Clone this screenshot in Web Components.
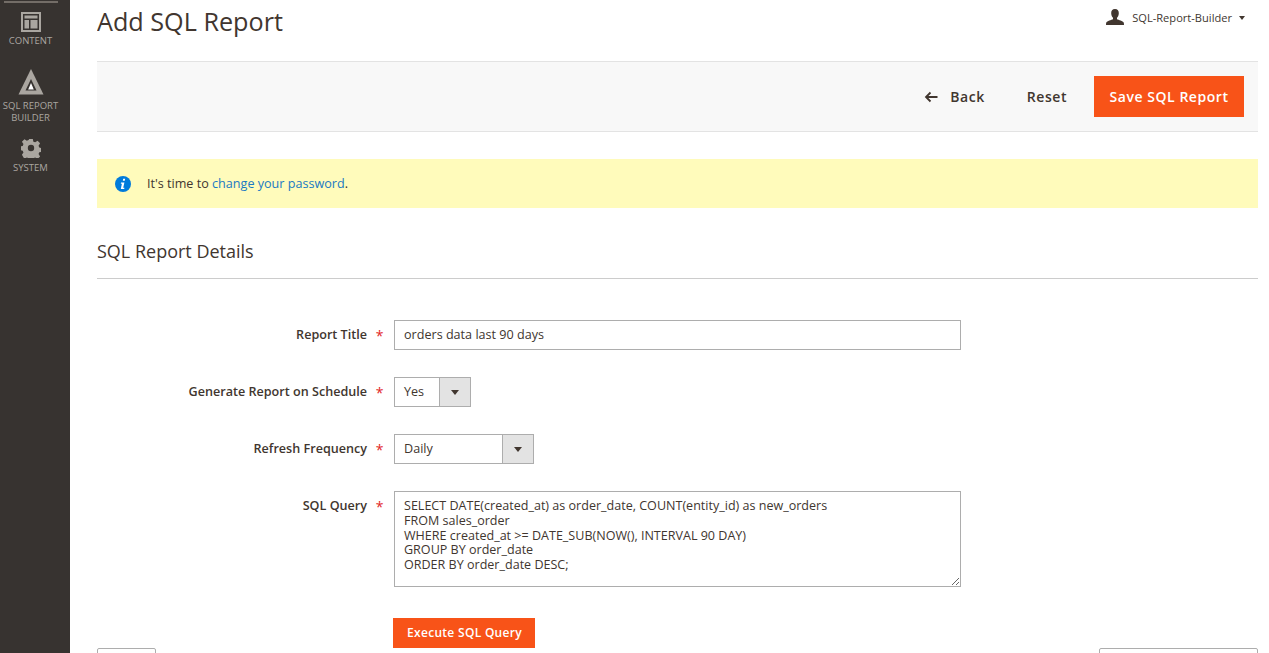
<!DOCTYPE html>
<html><head><meta charset="utf-8"><title>Add SQL Report</title>
<style>
html,body{margin:0;padding:0;height:653px;overflow:hidden;background:#fff}
body{font-family:"Open Sans","Liberation Sans",sans-serif;font-size:14px;color:#41362f;display:flex}
</style></head><body>
<admin-sidebar>
  <nav-item label="CONTENT" icon="content"></nav-item>
  <nav-item label="SQL REPORT BUILDER" icon="sql"></nav-item>
  <nav-item label="SYSTEM" icon="system"></nav-item>
</admin-sidebar>
<page-main>
  <page-head title="Add SQL Report" user="SQL-Report-Builder"></page-head>
  <action-bar></action-bar>
  <notice-bar>It's time to <a href="#">change your password</a>.</notice-bar>
  <section-title>SQL Report Details</section-title>
  <form-row label="Report Title" style="--top:41px"><text-field>orders data last 90 days</text-field></form-row>
  <form-row label="Generate Report on Schedule" style="--top:27px"><select-field width="77">Yes</select-field></form-row>
  <form-row label="Refresh Frequency" style="--top:27px"><select-field width="140">Daily</select-field></form-row>
  <form-row label="SQL Query" style="--top:27px"><query-area>SELECT DATE(created_at) as order_date, COUNT(entity_id) as new_orders
FROM sales_order
WHERE created_at &gt;= DATE_SUB(NOW(), INTERVAL 90 DAY)
GROUP BY order_date
ORDER BY order_date DESC;</query-area></form-row>
  <run-button>Execute SQL Query</run-button>
  <grid-peek></grid-peek>
</page-main>
<script>
function el(name,css,html){
  customElements.define(name,class extends HTMLElement{
    connectedCallback(){
      if(this.shadowRoot)return;
      const r=this.attachShadow({mode:'open'});
      r.innerHTML='<style>'+css+'</style>'+(typeof html==='function'?html(this):html);
    }
  });
}
const ICONS={
content:'<svg width="20" height="20" viewBox="0 0 20 20"><path fill="#aaa6a0" fill-rule="evenodd" d="M0 0h20v20H0zM2 2v16h16V2z"/><path fill="#aaa6a0" d="M3.500 3.500h13v3h-13zM3.500 8h4.500v8.500H3.500zM9.500 8h7v8.500h-7z"/></svg>',
sql:'<svg width="26" height="27" viewBox="0 0 26 27"><path fill="#aaa6a0" d="M13 1l12.500 25.500H.5z"/><path fill="#373330" d="M13 11l5.500 11.500h-11z"/><path fill="#fff" d="M13 15l2.800 6.500h-5.600z"/></svg>',
system:'<svg width="20" height="20" viewBox="0 0 22 22"><path fill="#aaa6a0" fill-rule="evenodd" d="M9 1h4l.6 3 2 .8 2.600-1.700 2.800 2.800-1.700 2.600.8 2 2.900.6v4l-2.900.6-.8 2 1.700 2.600-2.800 2.800-2.600-1.700-2 .8-.6 3H9l-.6-3-2-.8-2.600 1.700L1 18.500l1.700-2.600-.8-2-2.900-.6v-4l2.900-.6.8-2L1 4.100 3.800 1.300l2.600 1.700 2-.8zM11 7.500a3.500 3.500 0 1 0 0 7 3.500 3.500 0 0 0 0-7z"/></svg>'};
el('admin-sidebar',`:host{display:block;flex:none;width:70px;height:653px;background:#373330;box-sizing:border-box;padding-top:1px}
.rule{height:2px;width:54px;margin-left:4px;background:#736d67}
.items{display:flex;flex-direction:column}`,'<div class="rule"></div><div class="items"><slot></slot></div>');
el('nav-item',`:host{display:flex;flex-direction:column;align-items:center;text-align:center;color:#aaa6a0;font-size:9.500px;line-height:12px;width:61px}
:host([icon=content]){padding-top:9px;height:56px}
:host([icon=sql]){height:70px}
svg{display:block}
.t{margin-top:3px}
:host([icon=sql]) .t{margin-top:5px}
:host([icon=system]) .t{margin-top:4px}`,
h=>ICONS[h.getAttribute('icon')]+'<div class="t">'+h.getAttribute('label')+'</div>');
el('page-main',`:host{display:block;flex:none;width:1161px;margin-left:27px;height:653px;overflow:hidden}`,'<slot></slot>');
el('page-head',`:host{display:flex;justify-content:space-between;height:61px}
h1{margin:0;font-size:25.200px;font-weight:400;line-height:43px;height:43px;color:#41362f}
.u{display:flex;align-items:center;gap:8px;height:34px;margin-right:13px;font-size:11.100px;color:#41362f}
.c{width:0;height:0;border:3px solid transparent;border-top:4px solid #41362f;border-bottom:0;margin:1px 0 0 -1px}`,
h=>'<h1>'+h.getAttribute('title')+'</h1><div class="u"><svg width="18" height="16" viewBox="0 0 18 16"><path fill="#41362f" d="M9 0c2.700 0 3.900 1.800 3.800 4.200-.1 2-.8 3.600-1.800 4.600v1.400c1.500.7 6 1.700 6.700 3.400.2.700.3 1.400.3 2.400H0c0-1 .1-1.700.3-2.400C1 11.900 5.500 10.900 7 10.200V8.800c-1-1-1.700-2.600-1.800-4.600C5.100 1.800 6.300 0 9 0z"/></svg><span>'+h.getAttribute('user')+'</span><span class="c"></span></div>');
el('action-bar',`:host{display:flex;justify-content:flex-end;align-items:center;height:69px;background:#f8f8f8;border-top:1px solid #e3e3e3;border-bottom:1px solid #e3e3e3;padding-right:14px}
.b{font-weight:600;font-size:14px;letter-spacing:.55px;color:#41362f;display:flex;align-items:center}
.back{gap:12px;margin-right:42px}
.reset{margin-right:27px}
.save{background:#f85318;color:#fff;height:41px;width:150px;justify-content:center}`,
'<div class="b back"><svg width="14" height="12" viewBox="0 0 14 12"><path fill="none" stroke="#41362f" stroke-width="1.800" d="M13.500 6H2M6.500 1.500L2 6l4.500 4.500"/></svg><span>Back</span></div><div class="b reset">Reset</div><div class="b save">Save SQL Report</div>');
el('notice-bar',`:host{display:flex;align-items:center;height:49px;margin-top:27px;background:#fffbbb;padding-left:18px;font-size:12.600px;line-height:16px;color:#41362f}
svg{margin-right:16px}
::slotted(a){color:#1979c3;text-decoration:none}`,
'<svg width="16" height="16" viewBox="0 0 16 16"><circle cx="8" cy="8" r="8" fill="#007bdb"/><path fill="#fff" d="M8.200 2.800h2l-.4 2h-2zM6 6.500h3.400l-1.200 5.300h1.200l-.2 1.200H5.800l1.100-5.300H5.800z"/></svg><span><slot></slot></span>');
el('section-title',`:host{display:block;height:71px;box-sizing:border-box;padding-top:30px;line-height:27px;font-size:18px;font-weight:400;color:#41362f;border-bottom:1px solid #cccccc}`,'<slot></slot>');
el('form-row',`:host{display:flex;margin-top:var(--top)}
.l{width:270px;height:30px;text-align:right;font-weight:600;font-size:12.600px;line-height:29px;color:#41362f}
.s{width:27px;height:30px;text-align:center;color:#e22626;font-size:14px;line-height:31px;margin-left:-1px;margin-right:1px}
.c{flex:1}`,
h=>'<div class="l">'+h.getAttribute('label')+'</div><div class="s">*</div><div class="c"><slot></slot></div>');
el('text-field',`:host{display:block;width:567px;height:30px;box-sizing:border-box;border:1px solid #adadad;padding:0 9px;font-size:12.600px;line-height:27px;color:#41362f}`,'<slot></slot>');
el('select-field',`:host{display:flex;height:30px;box-sizing:border-box;border:1px solid #adadad;font-size:12.600px;line-height:27px;color:#41362f}
.v{flex:1;padding-left:9px;}
.a{width:30px;background:#e3e3e3;border-left:1px solid #adadad;display:flex;align-items:center;justify-content:center}
.a i{display:block;width:0;height:0;border:4px solid transparent;border-top:5px solid #41362f;border-bottom:0}`,
h=>'<style>:host{width:'+h.getAttribute('width')+'px}</style><div class="v"><slot></slot></div><div class="a"><i></i></div>');
el('query-area',`:host{display:block;width:567px;height:96px;box-sizing:border-box;border:1px solid #adadad;padding:7px 9px;font-size:12.550px;line-height:14.800px;color:#41362f;white-space:pre;overflow:auto;resize:both}`,'<slot></slot>');
el('run-button',`:host{display:block;box-sizing:border-box;padding-left:1px;width:142px;height:30px;margin:31px 0 0 296px;background:#f85318;color:#fff;font-weight:600;font-size:12px;letter-spacing:.3px;line-height:30px;text-align:center}`,'<slot></slot>');
el('grid-peek',`:host{display:flex;justify-content:space-between}
div{height:20px;box-sizing:border-box;border:1px solid #adadad;border-radius:2px;background:#fff}
.a{width:59px}.b{width:159px}`,'<div class="a"></div><div class="b"></div>');
</script>
</body></html>
